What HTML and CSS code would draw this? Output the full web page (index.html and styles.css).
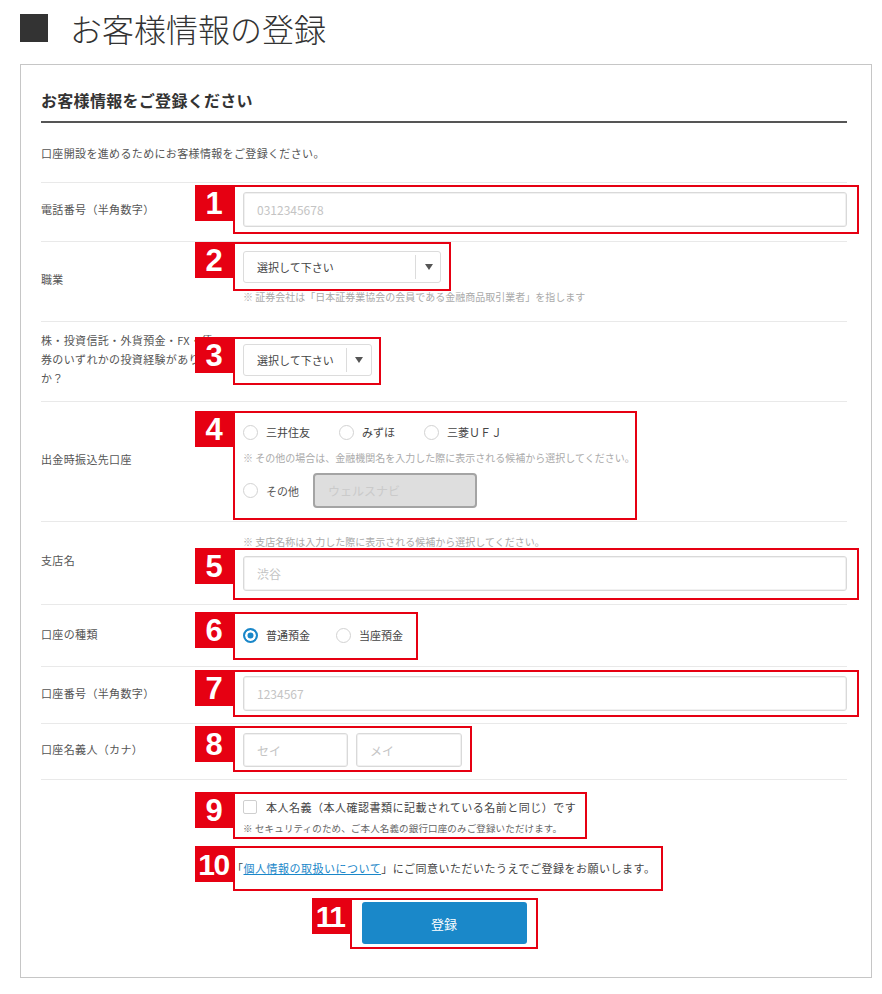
FILE: index.html
```html
<!DOCTYPE html>
<html lang="ja">
<head>
<meta charset="utf-8">
<title>お客様情報の登録</title>
<link rel="stylesheet" href="styles.css">
</head>
<body>
<div class="page">
  <h1 class="page-title"><span class="title-mark"></span>お客様情報の登録</h1>

  <section class="card">
    <h2 class="card-heading">お客様情報をご登録ください</h2>
    <p class="card-lead">口座開設を進めるためにお客様情報をご登録ください。</p>

    <div class="form">
      <div class="row row-tel">
        <div class="label">電話番号（半角数字）</div>
        <div class="ctl">
          <div class="mk">
            <input class="text" type="text" placeholder="0312345678">
            <div class="frame frame-1"><span class="badge">1</span></div>
          </div>
        </div>
      </div>

      <div class="row">
        <div class="label">職業</div>
        <div class="ctl">
          <div class="mk fit">
            <div class="select select-wide">
              <span class="select-value">選択して下さい</span>
              <span class="select-arrow"><span class="tri"></span></span>
            </div>
            <div class="frame frame-2"><span class="badge">2</span></div>
          </div>
          <p class="note note-job">※ 証券会社は「日本証券業協会の会員である金融商品取引業者」を指します</p>
        </div>
      </div>

      <div class="row row-exp">
        <div class="label label-long">株・投資信託・外貨預金・FX・債<br>券のいずれかの投資経験があります<br>か？</div>
        <div class="ctl ctl-center">
          <div class="mk fit">
            <div class="select">
              <span class="select-value select-value-fit">選択して下さい</span>
              <span class="select-arrow"><span class="tri"></span></span>
            </div>
            <div class="frame frame-3"><span class="badge">3</span></div>
          </div>
        </div>
      </div>

      <div class="row row-bank">
        <div class="label">出金時振込先口座</div>
        <div class="ctl">
          <div class="mk mk-bank">
            <div class="radios">
              <label class="radio-item"><input class="radio" type="radio" name="bank">三井住友</label>
              <label class="radio-item"><input class="radio" type="radio" name="bank">みずほ</label>
              <label class="radio-item"><input class="radio" type="radio" name="bank">三菱ＵＦＪ</label>
            </div>
            <p class="note note-bank">※ その他の場合は、金融機関名を入力した際に表示される候補から選択してください。</p>
            <div class="other">
              <label class="radio-item radio-other"><input class="radio" type="radio" name="bank">その他</label>
              <input class="text text-disabled" type="text" placeholder="ウェルスナビ" disabled>
            </div>
            <div class="frame frame-4"><span class="badge">4</span></div>
          </div>
        </div>
      </div>

      <div class="row row-branch">
        <div class="label">支店名</div>
        <div class="ctl">
          <p class="note note-branch">※ 支店名称は入力した際に表示される候補から選択してください。</p>
          <div class="mk mk-branch">
            <input class="text" type="text" placeholder="渋谷">
            <div class="frame frame-5"><span class="badge">5</span></div>
          </div>
        </div>
      </div>

      <div class="row row-type">
        <div class="label">口座の種類</div>
        <div class="ctl">
          <div class="mk fit">
            <div class="radios radios-type">
              <label class="radio-item"><input class="radio" type="radio" name="type" checked>普通預金</label>
              <label class="radio-item"><input class="radio" type="radio" name="type">当座預金</label>
            </div>
            <div class="frame frame-6"><span class="badge">6</span></div>
          </div>
        </div>
      </div>

      <div class="row">
        <div class="label">口座番号（半角数字）</div>
        <div class="ctl">
          <div class="mk">
            <input class="text" type="text" placeholder="1234567">
            <div class="frame frame-7"><span class="badge">7</span></div>
          </div>
        </div>
      </div>

      <div class="row row-last">
        <div class="label">口座名義人（カナ）</div>
        <div class="ctl">
          <div class="mk fit">
            <div class="kana">
              <input class="text text-sei" type="text" placeholder="セイ">
              <input class="text text-mei" type="text" placeholder="メイ">
            </div>
            <div class="frame frame-8"><span class="badge">8</span></div>
          </div>
        </div>
      </div>
    </div>

    <div class="agree">
      <div class="mk fit">
        <label class="check-line"><input class="check" type="checkbox">本人名義（本人確認書類に記載されている名前と同じ）です</label>
        <p class="note note-check">※ セキュリティのため、ご本人名義の銀行口座のみご登録いただけます。</p>
        <div class="frame frame-9"><span class="badge">9</span></div>
      </div>

      <div class="mk fit mk-consent">
        <p class="consent">「<a class="link" href="#">個人情報の取扱いについて</a>」にご同意いただいたうえでご登録をお願いします。</p>
        <div class="frame frame-10"><span class="badge badge-two">10</span></div>
      </div>
    </div>

    <div class="submit-wrap">
      <div class="mk">
        <button class="submit" type="button">登録</button>
        <div class="frame frame-11"><span class="badge badge-two">11</span></div>
      </div>
    </div>
  </section>
</div>
</body>
</html>
```

FILE: styles.css
```css
* { box-sizing: border-box; }

html, body {
  margin: 0;
  padding: 0;
  background: #fff;
}

body {
  font-family: "Noto Sans CJK JP", "Noto Sans", sans-serif;
  color: #444;
}

.page {
  width: 852px;
  margin-left: 20px;
}

/* ---------- title ---------- */
.page-title {
  display: flex;
  align-items: center;
  height: 56px;
  margin: 0;
  font-size: 32px;
  font-weight: 300;
  line-height: 1;
  color: #333;
}

.title-mark {
  width: 28px;
  height: 28px;
  background: #333;
  margin-right: 22px;
  flex: none;
}

/* ---------- card ---------- */
.card {
  margin-top: 8px;
  border: 1px solid #c6c6c6;
  padding: 23px 24px 33px 20px;
}

.card-heading {
  margin: 0;
  padding-bottom: 9px;
  border-bottom: 2px solid #555;
  font-size: 16px;
  line-height: 24px;
  font-weight: 700;
  letter-spacing: 0.3px;
  color: #333;
}

.card-lead {
  margin: 20px 0 19px;
  font-size: 11px;
  line-height: 20px;
  letter-spacing: 0.35px;
  color: #555;
}

/* ---------- rows ---------- */
.row {
  display: grid;
  grid-template-columns: 202px 1fr;
  border-top: 1px solid #e9e9e9;
  padding: 9px 0 12px;
}

.row-tel { padding-bottom: 14px; }
.row-exp { padding-bottom: 13px; }
.row-bank { padding-bottom: 13px; }
.row-branch { padding-bottom: 13px; }

.row-last {
  border-bottom: 1px solid #e9e9e9;
}

.row-type {
  padding: 10px 0 11px;
}

.label {
  align-self: center;
  padding-right: 12px;
  font-size: 11px;
  line-height: 19.5px;
  letter-spacing: 0.35px;
  color: #555;
}

.label-long {
  line-height: 19px;
}

.ctl {
  min-width: 0;
}

.ctl-center {
  align-self: center;
}

/* ---------- annotation frames ---------- */
.mk {
  position: relative;
}

.fit {
  width: fit-content;
}

.frame {
  position: absolute;
  border: 2px solid #e60012;
  pointer-events: none;
  z-index: 2;
}

.badge {
  position: absolute;
  left: -40px;
  top: -2px;
  width: 38px;
  height: 36px;
  background: #e60012;
  color: #fff;
  font-family: "Liberation Sans", Arial, sans-serif;
  font-weight: 700;
  font-size: 31px;
  line-height: 37px;
  text-align: center;
}

.badge-two {
  letter-spacing: -1.5px;
  font-size: 30px;
  text-indent: -1px;
}

.frame-1  { top: -7px; bottom: -7px; left: -10px; right: -12px; }
.frame-2  { top: -9px; bottom: -8px; left: -10px; right: -10px; }
.frame-3  { top: -7px; bottom: -9px; left: -10px; right: -9px; }
.frame-4  { top: 0;    bottom: -12px; left: -10px; width: 404px; }
.frame-5  { top: -8px; bottom: -9px; left: -10px; right: -12px; }
.frame-6  { top: -3px; bottom: -5px; left: -10px; width: 185px; }
.frame-7  { top: -6px; bottom: -6px; left: -10px; right: -12px; }
.frame-8  { top: -7px; bottom: -5px; left: -10px; right: -10px; }
.frame-9  { top: -5px; bottom: -4px; left: -10px; width: 354px; }
.frame-10 { top: -12px; bottom: -13px; left: 1px; width: 430px; }
.frame-11 { top: -4px; bottom: -5px; left: -12px; right: -11px; }

/* ---------- controls ---------- */
.text {
  display: block;
  width: 100%;
  height: 35px;
  margin: 0;
  padding: 0 13px;
  border: 1px solid #d9d9d9;
  border-radius: 3px;
  box-shadow: inset 0 0 0 1px #f1f1f1;
  background: #fff;
  font-family: inherit;
  font-size: 12px;
  color: #444;
  outline: none;
}

.text::placeholder {
  color: #c4c4c4;
}

.text-disabled {
  width: 164px;
  border: 2px solid #a4a4a4;
  border-radius: 4px;
  background: #dedede;
  box-shadow: none;
  padding: 0 13px;
}

.text-disabled::placeholder {
  color: #cacaca;
}

.kana {
  display: flex;
  gap: 8px;
}

.text-sei { width: 105px; height: 34px; }
.text-mei { width: 106px; height: 34px; }

.select {
  display: flex;
  align-items: center;
  height: 32px;
  border: 1px solid #dcdcdc;
  border-radius: 3px;
  background: #fff;
  font-size: 11px;
  color: #444;
}

.select-wide {
  width: 198px;
}

.select-value {
  flex: 1;
  padding-left: 13px;
  white-space: nowrap;
}

.select-value-fit {
  flex: none;
  padding-right: 12px;
}

.select-arrow {
  flex: none;
  width: 25px;
  height: 24px;
  border-left: 1px solid #dcdcdc;
  display: flex;
  align-items: center;
  justify-content: center;
}

.tri {
  width: 0;
  height: 0;
  border-left: 4px solid transparent;
  border-right: 4px solid transparent;
  border-top: 6px solid #555;
  margin-left: 1px;
}

.radios {
  display: flex;
  align-items: center;
  height: 20px;
}

.radios-type {
  height: 40px;
}

.radio-item {
  display: flex;
  align-items: center;
  gap: 8px;
  margin-right: 29px;
  font-size: 11px;
  color: #444;
  white-space: nowrap;
}

.radios-type .radio-item {
  margin-right: 26px;
}

.radios-type .radio-item:last-child {
  margin-right: 12px;
}

.radio {
  appearance: none;
  -webkit-appearance: none;
  width: 15px;
  height: 15px;
  margin: 0;
  border: 1.5px solid #d2d2d2;
  border-radius: 50%;
  background: #fff;
  flex: none;
}

.radio:checked {
  border: 2px solid #1a87c9;
  background: #1a87c9;
  box-shadow: inset 0 0 0 2.5px #fff;
}

.mk-bank {
  padding-top: 11px;
}

.other {
  display: flex;
  align-items: center;
  margin-top: 7px;
}

.radio-other {
  margin-right: 14px;
  color: #555;
}

.note {
  margin: 0;
  font-size: 10px;
  line-height: 16px;
  color: #aaa;
  white-space: nowrap;
}

.note-job {
  margin: 6px 0 4px;
}

.note-bank {
  margin-top: 8px;
}

.note-branch {
  margin-top: 3px;
}

.mk-branch {
  margin-top: 6px;
}

/* ---------- agreement ---------- */
.agree {
  margin-left: 202px;
  padding-top: 17px;
}

.check-line {
  display: flex;
  align-items: center;
  gap: 9px;
  line-height: 20px;
  font-size: 11px;
  letter-spacing: 0.5px;
  color: #444;
  white-space: nowrap;
}

.check {
  appearance: none;
  -webkit-appearance: none;
  width: 14px;
  height: 14px;
  margin: 0;
  border: 1px solid #cfcfcf;
  border-radius: 2px;
  background: #fff;
  flex: none;
}

.note-check {
  margin-top: 4px;
  font-size: 9.5px;
  line-height: 14px;
  letter-spacing: 0.15px;
  color: #666;
}

.mk-consent {
  margin: 23px 0 0 -11px;
}

.consent {
  margin: 0;
  font-size: 11px;
  line-height: 20px;
  letter-spacing: 0.5px;
  color: #444;
  white-space: nowrap;
}

.link {
  color: #1a87c9;
  text-decoration: underline;
}

/* ---------- submit ---------- */
.submit-wrap {
  display: flex;
  justify-content: center;
  margin-top: 24px;
}

.submit {
  display: block;
  width: 165px;
  height: 42px;
  border: 0;
  border-radius: 3px;
  background: #1a88c9;
  color: #fff;
  font-family: inherit;
  font-size: 13px;
  cursor: pointer;
}
```
